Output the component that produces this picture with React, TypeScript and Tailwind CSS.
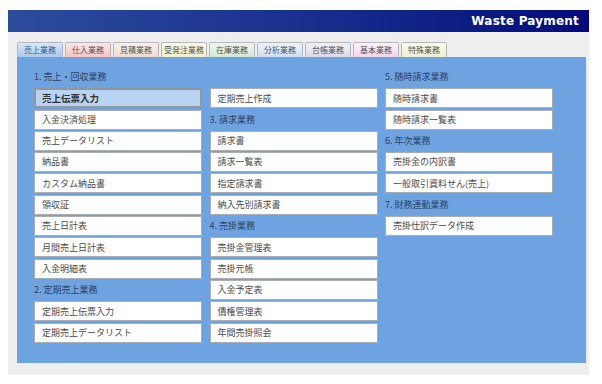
type Item = { kind: 'h' | 'b' | 'e'; label?: string; active?: boolean };

const TABS = [
  { label: '売上業務', bg: 'bg-linear-to-b from-[#d8e8f8] to-[#a9c9ee]', active: true },
  { label: '仕入業務', bg: 'bg-linear-to-b from-[#fde6e6] to-[#f7c4c4]' },
  { label: '見積業務', bg: 'bg-linear-to-b from-[#f8f0ea] to-[#eddcd0]' },
  { label: '受発注業務', bg: 'bg-linear-to-b from-[#fbfbea] to-[#f0f0cf]' },
  { label: '在庫業務', bg: 'bg-linear-to-b from-[#eef7ee] to-[#d3e9d3]' },
  { label: '分析業務', bg: 'bg-linear-to-b from-[#ecf3fb] to-[#cfe0f3]' },
  { label: '台帳業務', bg: 'bg-linear-to-b from-[#f2f0f6] to-[#dedae8]' },
  { label: '基本業務', bg: 'bg-linear-to-b from-[#fdf0f8] to-[#f4d6ea]' },
  { label: '特殊業務', bg: 'bg-linear-to-b from-[#fbfbec] to-[#efefd2]' },
];

const COLUMNS: Item[][] = [
  [
    { kind: 'h', label: '1. 売上・回収業務' },
    { kind: 'b', label: '売上伝票入力', active: true },
    { kind: 'b', label: '入金決済処理' },
    { kind: 'b', label: '売上データリスト' },
    { kind: 'b', label: '納品書' },
    { kind: 'b', label: 'カスタム納品書' },
    { kind: 'b', label: '領収証' },
    { kind: 'b', label: '売上日計表' },
    { kind: 'b', label: '月間売上日計表' },
    { kind: 'b', label: '入金明細表' },
    { kind: 'h', label: '2. 定期売上業務' },
    { kind: 'b', label: '定期売上伝票入力' },
    { kind: 'b', label: '定期売上データリスト' },
  ],
  [
    { kind: 'e' },
    { kind: 'b', label: '定期売上作成' },
    { kind: 'h', label: '3. 請求業務' },
    { kind: 'b', label: '請求書' },
    { kind: 'b', label: '請求一覧表' },
    { kind: 'b', label: '指定請求書' },
    { kind: 'b', label: '納入先別請求書' },
    { kind: 'h', label: '4. 売掛業務' },
    { kind: 'b', label: '売掛金管理表' },
    { kind: 'b', label: '売掛元帳' },
    { kind: 'b', label: '入金予定表' },
    { kind: 'b', label: '債権管理表' },
    { kind: 'b', label: '年間売掛照会' },
  ],
  [
    { kind: 'h', label: '5. 随時請求業務' },
    { kind: 'b', label: '随時請求書' },
    { kind: 'b', label: '随時請求一覧表' },
    { kind: 'h', label: '6. 年次業務' },
    { kind: 'b', label: '売掛金の内訳書' },
    { kind: 'b', label: '一般取引資料せん(売上)' },
    { kind: 'h', label: '7. 財務連動業務' },
    { kind: 'b', label: '売掛仕訳データ作成' },
  ],
];

const jp = "font-['Noto_Sans_CJK_JP',sans-serif]";

function Row({ item }: { item: Item }) {
  if (item.kind === 'e') return <div className="h-[20px]" />;
  if (item.kind === 'h') {
    return (
      <div className="flex h-[20px] items-center text-[9px] text-[#2f405c]">{item.label}</div>
    );
  }
  return (
    <div
      className={
        item.active
          ? 'flex h-[20px] items-center border-2 border-[#8f989f] bg-[#b9d3f3] pl-[6px] text-[9.5px] font-bold text-[#333]'
          : 'flex h-[20px] items-center border border-[#a7aeb6] bg-white pl-[7px] text-[9px] text-[#4a4a4a]'
      }
    >
      {item.label}
    </div>
  );
}

export default function App() {
  return (
    <div className={`h-[384px] w-[602px] bg-white pl-[8px] pt-[10px] ${jp}`}>
      <div className="w-[581px]">
        <div className="flex h-[22px] items-center justify-end bg-linear-to-r from-[#2c4c9e] via-[#1a2f8e] to-[#05087c] pr-[10px]">
          <span className="font-['DejaVu_Sans',sans-serif] text-[12px] font-bold tracking-[0.2px] text-white">
            Waste Payment
          </span>
        </div>
        <div className="bg-[#eeeeee] pb-[12px] pl-[9px] pr-[3px] pt-[10px]">
          <div className="flex h-[15px] items-end gap-[2px]">
            {TABS.map((t) => (
              <div
                key={t.label}
                className={`flex h-[15px] w-[46px] items-center justify-center rounded-t-[2px] border border-b-0 border-[#b4b8bc] text-[8px] ${t.bg} ${
                  t.active ? 'text-[#2d5a92]' : 'text-[#555]'
                }`}
              >
                {t.label}
              </div>
            ))}
          </div>
          <div className="flex h-[306px] gap-[7.5px] bg-[#6ea3e2] pl-[17px] pt-[10px]">
            {COLUMNS.map((col, i) => (
              <div key={i} className="flex w-[168px] flex-col gap-[1.3px]">
                {col.map((item, j) => (
                  <Row key={j} item={item} />
                ))}
              </div>
            ))}
          </div>
        </div>
      </div>
    </div>
  );
}
